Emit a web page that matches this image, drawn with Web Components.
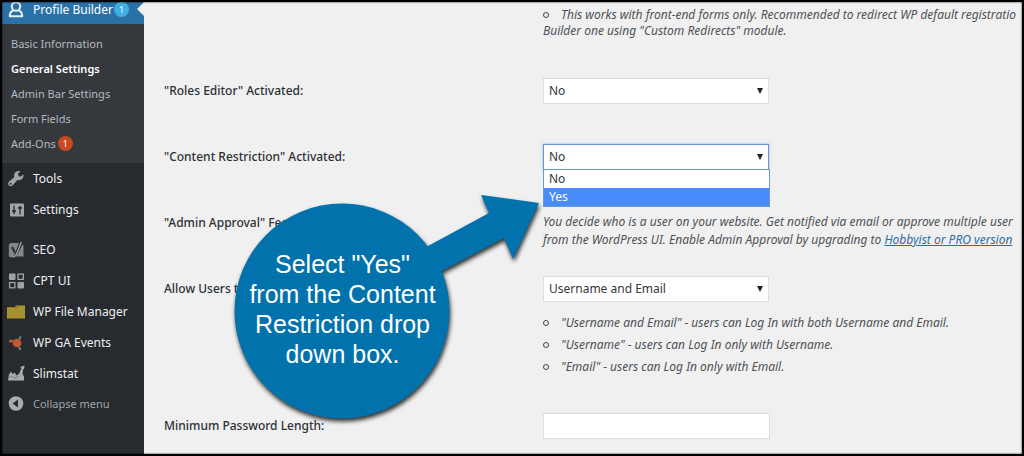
<!DOCTYPE html>
<html lang="en">
<head>
<meta charset="utf-8">
<title>Profile Builder – General Settings</title>
<style>
  body { margin: 0; font: 12px/18px "Noto Sans", "Open Sans", sans-serif; color: #32373c; background: #f0f0f0; }
</style>
</head>
<body>
<pb-app></pb-app>
<script>
const define = (name, html, setup) => {
  const tpl = document.createElement('template');
  tpl.innerHTML = html;
  customElements.define(name, class extends HTMLElement {
    constructor() {
      super();
      this.attachShadow({ mode: 'open' }).append(tpl.content.cloneNode(true));
    }
    connectedCallback() { if (setup) setup(this, this.shadowRoot); }
  });
};

const ICONS = {
  user: '<g fill="none" stroke="#e4eef6" stroke-width="2"><circle cx="8" cy="5" r="4.2"/><path d="M5.6 8.8C3 9.600 1.800 11.500 1.800 14.700H14.200C14.200 11.500 13 9.600 10.400 8.800" stroke-linejoin="round"/></g>',
  tools: '<path fill="#a0a5aa" d="M15.300 3.800 12.800 6.200 10.600 5.500 10 3.300 12.400.8C10.400.1 8.200.6 7 2.300 6 3.700 5.900 5.200 6.400 6.600L.9 11.300C0 12.300 0 13.900.9 14.900 1.900 15.900 3.500 15.900 4.500 14.900L9.400 9.400C10.900 9.900 12.500 9.700 13.700 8.700 15.200 7.500 15.900 5.600 15.300 3.800ZM2.700 12.300a1 1 0 1 1 0 2 1 1 0 0 1 0-2Z"/>',
  settings: '<rect x="2" y="2" width="14" height="13" rx="1" fill="#a0a5aa"/><g stroke="#272b30" fill="#272b30" stroke-width="1.300"><path d="M6 4V12.500M4 9.500H8M12 4.500V13M10 6.500H14" fill="none"/><path d="M4.500 9.500h3L6 11.500zM10.500 6.500h3L12 4.500z" stroke="none"/></g>',
  seo: '<path fill="#82878c" d="M3.500 1.500H11L9.200 6 7 12 5 16 1.500 15.500C.8 15 .8 14.500.8 13.700V4.200C.8 2.500 1.800 1.500 3.500 1.500Z"/><path fill="#82878c" d="M14.500 3C15.200 3.500 15.500 4 15.500 5V15H7.800C9 14 9.800 12.500 10.400 11Z"/><path fill="none" stroke="#272b30" stroke-width="2" d="M4 5.500 7 11.200"/><path fill="none" stroke="#a0a5aa" stroke-width="1.300" d="M13.300.5 9 11.500C8.200 14 7 15.300 5 15.300"/>',
  cpt: '<g fill="#a0a5aa"><rect x="1" y="1" width="6.500" height="6.500" rx="1"/><rect x="9.500" y="9.500" width="6.500" height="6.500" rx="1"/></g><g fill="none" stroke="#a0a5aa" stroke-width="1.300"><rect x="10" y="1.600" width="5.300" height="5.300"/><rect x="1.600" y="10" width="5.300" height="5.300"/></g><g fill="#7b8086"><circle cx="3.500" cy="3" r=".7"/><circle cx="5.500" cy="5.300" r=".6"/><circle cx="12" cy="11.500" r=".7"/><circle cx="13.800" cy="14" r=".6"/></g>',
  folder: '<path fill="#a8922f" d="M-1 3.500H7L8 2H17V15H-1Z"/><path fill="#8f7a26" d="M-1 3.500H7L8 2H10L9 4.500H-1Z"/>',
  ga: '<g stroke="#5d7a55" stroke-width="2"><path d="M8 8 3 6M10 8 12 3M10 9 12 15"/></g><circle cx="9" cy="8.500" r="4.300" fill="#c1562f"/><circle cx="2.500" cy="6.500" r="1.500" fill="#b06a3a"/><circle cx="12.200" cy="3" r="1.200" fill="#5d8a70"/><circle cx="12" cy="14.500" r="1.200" fill="#5d8a70"/>',
  slim: '<path fill="#a8acb0" d="M0 15 1 9 3 6 4.500 8.500 7 7 8 10 11 8.500 13.500 2.500 12 1.500 16.500 0 16 4 15 3.500 14.500 8.500 16 11V15Z"/><path fill="none" stroke="#6a6f74" stroke-width=".8" d="M1.500 12 4 10.500 7 12.500 11 10.500"/>',
  collapse: '<circle cx="8" cy="8" r="7.300" fill="#a8acb0"/><path fill="#272b30" d="M10 4V12L4.600 8Z"/>'
};

define('pb-badge', `<style>
  :host { display: inline-grid; place-items: center; width: 15px; height: 15px; border-radius: 50%;
    background: var(--badge, #ca4a1f); color: #fff; font-size: 9px; line-height: 15px; font-weight: 400; }
</style><slot></slot>`);

define('pb-menu-item', `<style>
  :host { display: block; }
  a { display: flex; align-items: center; height: 31px; padding-left: 5px; gap: 8px; color: #eee; text-decoration: none; }
  svg { width: 18px; height: 18px; flex: none; }
  span { display: flex; align-items: center; gap: 1px; white-space: nowrap; }
  :host([current]) { background: #2a71a7; position: relative; }
  :host([current]) a { height: 15px; padding-bottom: 7px; color: #fff; }
  :host([current])::after { content: ""; position: absolute; right: 0; top: 0; width: 7px; height: 14px;
    background: #f0f0f0; clip-path: polygon(0 50%, 100% 0, 100% 100%); }
  :host([muted]) a { height: 29px; color: #a0a5aa; font-size: 11px; }
</style><a href="#"><svg viewBox="-1 0 18 17" aria-hidden="true"></svg><span><slot></slot></span></a>`,
(el, root) => { root.querySelector('svg').innerHTML = ICONS[el.getAttribute('icon')]; });

define('pb-submenu', `<style>
  :host { display: block; padding: 7px 0; background: #35393e; }
</style><slot></slot>`);

define('pb-submenu-item', `<style>
  :host { display: block; }
  a { display: flex; align-items: center; gap: 2px; height: 25px; padding-left: 9px; font-size: 11px;
    color: #b4b9be; text-decoration: none; white-space: nowrap; }
  :host([current]) a { color: #fff; font-weight: 600; }
</style><a href="#"><slot></slot></a>`);

define('pb-sidebar', `<style>
  :host { display: block; background: #272b30; }
  .group { margin-bottom: 9px; }
</style>
<nav aria-label="Admin menu">
  <div class="group">
    <pb-menu-item icon="user" current>Profile Builder<pb-badge style="--badge:#3fb0e4">1</pb-badge></pb-menu-item>
    <pb-submenu>
      <pb-submenu-item>Basic Information</pb-submenu-item>
      <pb-submenu-item current>General Settings</pb-submenu-item>
      <pb-submenu-item>Admin Bar Settings</pb-submenu-item>
      <pb-submenu-item>Form Fields</pb-submenu-item>
      <pb-submenu-item>Add-Ons<pb-badge>1</pb-badge></pb-submenu-item>
    </pb-submenu>
    <pb-menu-item icon="tools">Tools</pb-menu-item>
    <pb-menu-item icon="settings">Settings</pb-menu-item>
  </div>
  <pb-menu-item icon="seo">SEO</pb-menu-item>
  <pb-menu-item icon="cpt">CPT UI</pb-menu-item>
  <pb-menu-item icon="folder">WP File Manager</pb-menu-item>
  <pb-menu-item icon="ga">WP GA Events</pb-menu-item>
  <pb-menu-item icon="slim">Slimstat</pb-menu-item>
  <pb-menu-item icon="collapse" muted>Collapse menu</pb-menu-item>
</nav>`);

define('pb-select', `<style>
  :host { display: block; position: relative; width: 226px; }
  select { appearance: none; display: block; box-sizing: border-box; width: 100%; height: 26px; margin: 0; padding: 0 5px;
    border: 1px solid #ddd; border-radius: 0; background: #fff; color: #32373c; font: inherit; outline: 0; }
  :host::after { content: ""; position: absolute; right: 6px; top: 10px; width: 6px; height: 6px;
    background: #222; clip-path: polygon(0 0, 100% 0, 50% 100%); }
  :host([open]) select { border-color: #6c98cf; box-shadow: 0 0 2px rgba(30,140,190,.6); }
  ul { display: none; position: absolute; z-index: 1; left: 0; top: 25px; right: -1px; margin: 0; padding: 0; list-style: none;
    border: 1px solid #6c98cf; background: #fff; }
  :host([open]) ul { display: block; }
  li { padding: 0 5px; }
  li[aria-selected=true] { background: #4a8bfb; color: #fff; }
</style><select></select><ul role="listbox"></ul>`,
(el, root) => {
  const select = root.querySelector('select'), list = root.querySelector('ul');
  select.setAttribute('aria-label', el.getAttribute('label'));
  list.setAttribute('aria-label', el.getAttribute('label') + ' options');
  for (const text of el.getAttribute('options').split('|')) {
    select.add(new Option(text));
    if (!el.hasAttribute('open')) continue;
    const li = document.createElement('li');
    li.setAttribute('role', 'option');
    li.setAttribute('aria-selected', text === el.getAttribute('highlight'));
    li.textContent = text;
    list.append(li);
  }
});

define('pb-textbox', `<style>
  :host { display: block; width: 227px; }
  input { display: block; box-sizing: border-box; width: 100%; height: 26px; margin: 0; padding: 0 5px;
    border: 1px solid #ddd; background: #fff; font: inherit; }
</style><input type="text">`,
(el, root) => root.querySelector('input').setAttribute('aria-label', el.getAttribute('label')));

define('pb-note', `<style>
  :host { display: block; font-style: italic; color: #4d5156; white-space: nowrap; }
  p { margin: 0; }
  :host([bullet]) p::before { content: ""; display: inline-block; box-sizing: border-box; width: 6px; height: 6px;
    margin-right: 12px; border: 1px solid #444; border-radius: 50%; vertical-align: 1px; }
  ::slotted(a) { color: #2a6ea6; }
</style><p><slot></slot></p>`);

define('pb-row', `<style>
  :host { display: grid; grid-template-columns: 379px minmax(0, 1fr); box-sizing: border-box; min-height: 66px; padding-bottom: 27px; }
  .label { line-height: 26px; font-weight: 500; color: #2c3136; }
</style><div class="label"></div><div><slot></slot></div>`,
(el, root) => { root.querySelector('.label').textContent = el.getAttribute('label') || ''; });

define('pb-settings', `<style>
  :host { display: block; padding: 5px 0 0 20px; overflow: hidden; }
  .intro { min-height: 71px; }
  .intro pb-note { line-height: 16px; }
  .last { min-height: 26px; padding-bottom: 12px; }
  .stack { display: grid; gap: 4px; margin: 12px 0 10px; }
  .help { padding-top: 3px; }
</style>
<main>
  <pb-row class="intro"><pb-note bullet>This works with front-end forms only. Recommended to redirect WP default registratio<br>Builder one using "Custom Redirects" module.</pb-note></pb-row>
  <pb-row label='"Roles Editor" Activated:'><pb-select label="Roles Editor Activated" options="No|Yes"></pb-select></pb-row>
  <pb-row label='"Content Restriction" Activated:'><pb-select label="Content Restriction Activated" options="No|Yes" highlight="Yes" open></pb-select></pb-row>
  <pb-row label='"Admin Approval" Feature:'><pb-note class="help">You decide who is a user on your website. Get notified via email or approve multiple user<br>from the WordPress UI. Enable Admin Approval by upgrading to <a href="#">Hobbyist or PRO version</a></pb-note></pb-row>
  <pb-row label="Allow Users to">
    <pb-select label="Allow Users to Log in With" options="Username and Email|Username|Email"></pb-select>
    <div class="stack">
      <pb-note bullet>"Username and Email" - users can Log In with both Username and Email.</pb-note>
      <pb-note bullet>"Username" - users can Log In only with Username.</pb-note>
      <pb-note bullet>"Email" - users can Log In only with Email.</pb-note>
    </div>
  </pb-row>
  <pb-row class="last" label="Minimum Password Length:"><pb-textbox label="Minimum Password Length"></pb-textbox></pb-row>
</main>`);

define('pb-callout', `<style>
  :host { display: block; width: 320px; height: 240px; pointer-events: none; }
  svg { display: block; overflow: visible; filter: drop-shadow(1px 3px 2px rgba(0,0,0,.8)); }
  p { position: absolute; left: 0; top: 54px; width: 215px; margin: 0; text-align: center; white-space: nowrap;
    color: #fff; font: 25px/30px "Liberation Sans", Arial, sans-serif; }
</style>
<svg width="320" height="240" viewBox="0 0 320 240" fill="#0272ac" aria-hidden="true">
  <circle cx="107" cy="116" r="107.500"/>
  <path d="M150 75 193 51 254 18 246 0 304 8 278 64 269 43 207 76 150 110Z"/>
</svg>
<p><slot></slot></p>`);

define('pb-app', `<style>
  :host { display: grid; grid-template-columns: 142px minmax(0, 1fr); box-sizing: border-box; min-height: 100vh;
    position: relative; border: 2px solid #000; overflow: hidden; }
  :host::after { content: ""; position: absolute; inset: 0; box-shadow: inset 0 0 2px #000; pointer-events: none; }
  pb-callout { position: absolute; left: 233px; top: 193px; z-index: 2; }
</style>
<pb-sidebar></pb-sidebar>
<pb-settings></pb-settings>
<pb-callout>Select "Yes"<br>from the Content<br>Restriction drop<br>down box.</pb-callout>`);
</script>
</body>
</html>
